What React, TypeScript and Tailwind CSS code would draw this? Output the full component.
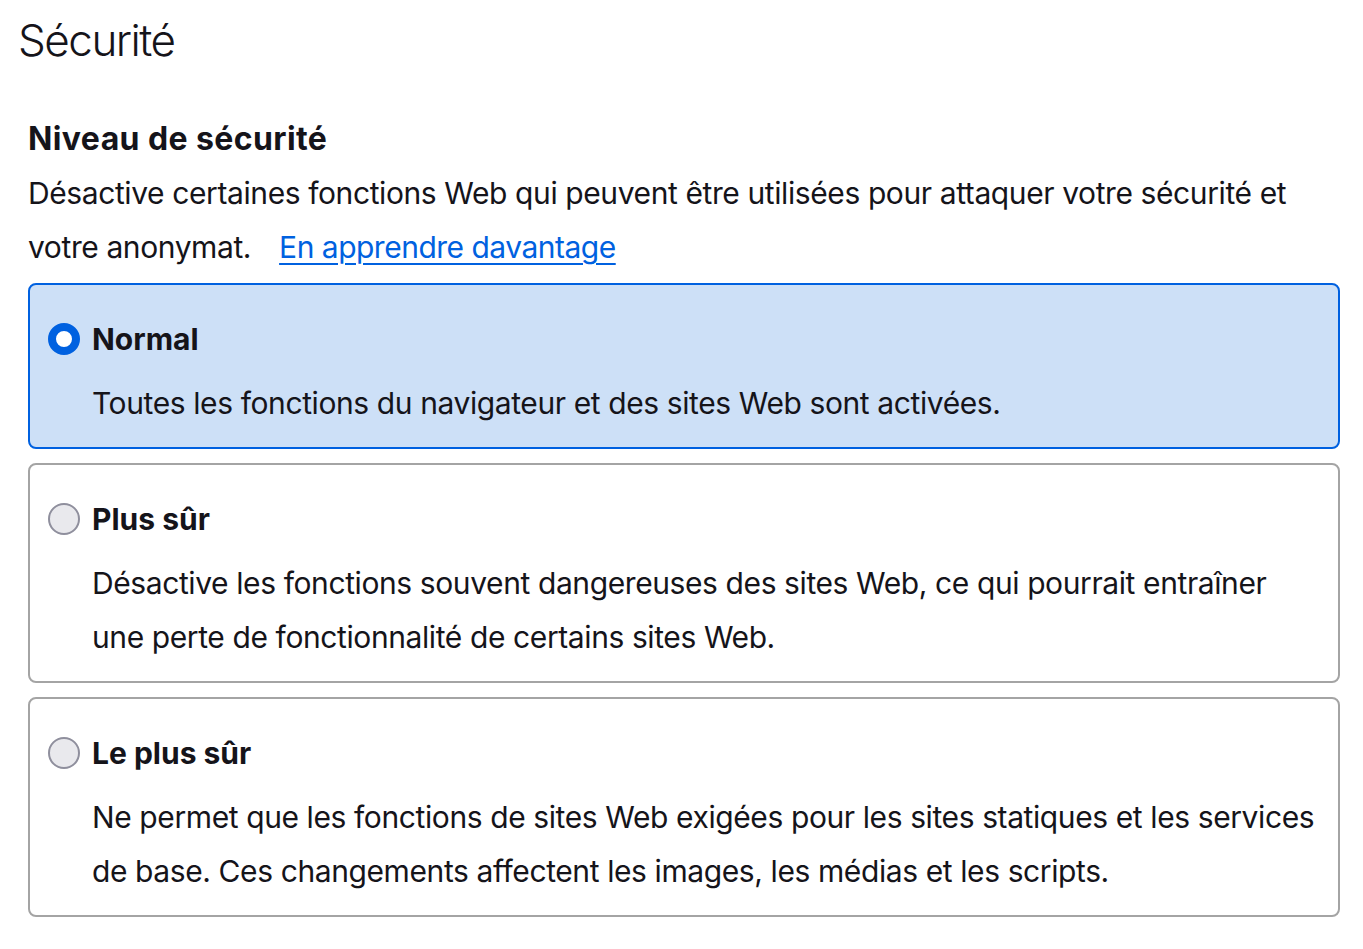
import React, { useState } from 'react';

type Level = {
  id: string;
  label: string;
  description: string;
};

const levels: Level[] = [
  {
    id: 'standard',
    label: 'Normal',
    description: 'Toutes les fonctions du navigateur et des sites Web sont activées.',
  },
  {
    id: 'safer',
    label: 'Plus sûr',
    description:
      'Désactive les fonctions souvent dangereuses des sites Web, ce qui pourrait entraîner une perte de fonctionnalité de certains sites Web.',
  },
  {
    id: 'safest',
    label: 'Le plus sûr',
    description:
      'Ne permet que les fonctions de sites Web exigées pour les sites statiques et les services de base. Ces changements affectent les images, les médias et les scripts.',
  },
];

function Radio({ checked }: { checked: boolean }) {
  return checked ? (
    <span className="w-[32px] h-[32px] rounded-full border-[8px] border-[#0061e0] bg-white shrink-0" />
  ) : (
    <span className="w-[32px] h-[32px] rounded-full border-2 border-[#8f8f9d] bg-[#e9e9ed] shrink-0" />
  );
}

export default function App() {
  const [level, setLevel] = useState('standard');

  return (
    <div className="min-h-screen bg-white text-[#15141a] font-['Inter','Liberation_Sans',sans-serif] pl-[18px] pr-[23px] pt-[14px]">
      <h1 className="text-[44px] leading-[53px] font-light tracking-[-1.5px]">Sécurité</h1>

      <section className="pl-[10px] mt-[52px]">
        <h2 className="text-[32px] leading-[40px] font-bold tracking-[0.4px]">Niveau de sécurité</h2>
        <p className="mt-[7px] text-[30px] leading-[54px] tracking-[-0.4px]">
          Désactive certaines fonctions Web qui peuvent être utilisées pour attaquer votre sécurité et
          votre anonymat.
          <a href="#" className="ml-[28px] text-[#0061e0] underline underline-offset-[5px] decoration-2 tracking-[-0.5px]">
            En apprendre davantage
          </a>
        </p>

        <div className="mt-[9px] flex flex-col gap-[14px]">
          {levels.map((l) => {
            const checked = level === l.id;
            return (
              <div
                key={l.id}
                onClick={() => setLevel(l.id)}
                className={
                  checked
                    ? 'rounded-[8px] border-2 border-[#0061e0] bg-[#cde0f7] pl-[18px] pr-[18px] pt-[27px] pb-[17px] cursor-pointer'
                    : 'rounded-[8px] border-2 border-[#a4a4a4] bg-white pl-[18px] pr-[18px] pt-[27px] pb-[17px] cursor-pointer'
                }
              >
                <div className="flex items-center gap-[12px] h-[54px]">
                  <Radio checked={checked} />
                  <span className="text-[30px] leading-[54px] font-bold">{l.label}</span>
                </div>
                <p className="mt-[10px] pl-[44px] text-[30px] leading-[54px] tracking-[-0.4px]">{l.description}</p>
              </div>
            );
          })}
        </div>
      </section>
    </div>
  );
}
